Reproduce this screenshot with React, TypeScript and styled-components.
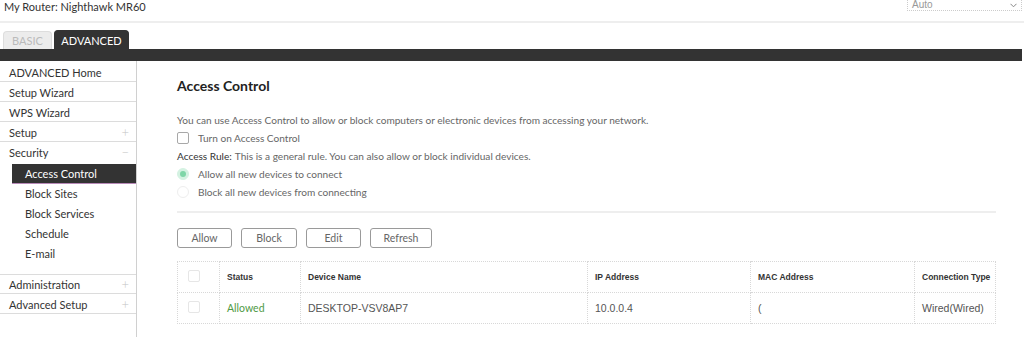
import styled, { createGlobalStyle } from 'styled-components';

const GlobalStyle = createGlobalStyle`
  html, body {
    margin: 0;
    padding: 0;
    background: #fff;
    font-family: Lato, "Open Sans", sans-serif;
    color: #333;
  }
  * {
    box-sizing: border-box;
  }
`;

const TopBar = styled.div`
  display: flex;
  justify-content: space-between;
  height: 23px;
  border-bottom: 2px solid #eeeeee;
`;

const RouterName = styled.div`
  font-size: 11px;
  line-height: 14px;
  padding-left: 4px;
  color: #333;
`;

const ModeSelect = styled.div`
  width: 115px;
  height: 11px;
  margin-right: 2px;
  border: 1px dotted #ccc;
  border-top: none;
  display: flex;
  justify-content: space-between;
  align-items: center;
  padding: 0 4px;
  font-family: "Liberation Sans", Arial, sans-serif;
  font-size: 10px;
  color: #999;
  line-height: 10px;
  overflow: hidden;
`;

const TabRow = styled.div`
  display: flex;
  align-items: flex-end;
  height: 26px;
  padding-left: 3px;
  gap: 2px;
`;

const Tab = styled.div<{ $active?: boolean; $w: number }>`
  width: ${(p) => p.$w}px;
  height: ${(p) => (p.$active ? '19px' : '18px')};
  border-radius: 4px 4px 0 0;
  font-size: 11px;
  display: flex;
  align-items: center;
  justify-content: center;
  background: ${(p) => (p.$active ? '#333' : '#ececec')};
  color: ${(p) => (p.$active ? '#fff' : '#bbb')};
  border: 1px solid ${(p) => (p.$active ? '#333' : '#ddd')};
  border-bottom: none;
`;

const DarkBar = styled.div`
  height: 12px;
  background: #333;
  margin-right: 2px;
`;

const Body = styled.div`
  display: flex;
`;

const Sidebar = styled.nav`
  width: 137px;
  flex-shrink: 0;
  border-right: 1px solid #d0d0d0;
  min-height: calc(100vh - 61px);
  padding-top: 1px;
`;

const NavItem = styled.div<{ $topBorder?: boolean; $last?: boolean }>`
  height: 20px;
  display: flex;
  align-items: center;
  justify-content: space-between;
  padding: 1px 7px 0 9px;
  font-size: 11px;
  color: #333;
  border-bottom: ${(p) => (p.$last ? 'none' : '1px solid #dcdcdc')};
  border-top: ${(p) => (p.$topBorder ? '1px solid #dcdcdc' : 'none')};
`;

const Sign = styled.span`
  color: #c4c4c4;
  font-size: 13px;
  font-weight: 300;
  line-height: 1;
`;

const SubList = styled.div`
  padding: 2px 0 10px 12px;
`;

const SubItem = styled.div<{ $active?: boolean }>`
  height: 20px;
  display: flex;
  align-items: center;
  padding-left: 13px;
  font-size: 11px;
  color: ${(p) => (p.$active ? '#fff' : '#333')};
  background: ${(p) => (p.$active ? '#333' : 'transparent')};
  border-bottom: 1px solid ${(p) => (p.$active ? '#b88ab8' : 'transparent')};
`;

const Main = styled.main`
  flex: 1;
  padding: 15px 29px 0 40px;
`;

const Title = styled.h1`
  margin: 0 0 15px;
  font-size: 14px;
  line-height: 20px;
  font-weight: 700;
  color: #222;
`;

const Line = styled.div`
  display: flex;
  align-items: center;
  height: 18px;
  font-size: 10.1px;
  color: #666;
  gap: 9px;

  b {
    color: #333;
    font-weight: 400;
    margin-right: 3px;
  }
`;

const CheckBox = styled.span<{ $faint?: boolean }>`
  width: 12px;
  height: 12px;
  border: 1px solid ${(p) => (p.$faint ? '#e6e6e6' : '#a8a8a8')};
  border-radius: 2px;
  display: inline-block;
  flex-shrink: 0;
`;

const Radio = styled.span<{ $checked?: boolean }>`
  width: 12px;
  height: 12px;
  border-radius: 50%;
  flex-shrink: 0;
  display: inline-flex;
  align-items: center;
  justify-content: center;
  background: ${(p) => (p.$checked ? '#d4f2e2' : '#fff')};
  border: 1px solid ${(p) => (p.$checked ? '#d4f2e2' : '#eeeeee')};

  &::after {
    content: '';
    width: 6px;
    height: 6px;
    border-radius: 50%;
    background: ${(p) => (p.$checked ? '#7fd6a8' : 'transparent')};
  }
`;

const Divider = styled.hr`
  border: none;
  height: 2px;
  background: #eeeeee;
  margin: 10px 0 15px;
`;

const ButtonRow = styled.div`
  display: flex;
  gap: 9px;
`;

const Button = styled.button<{ $w: number }>`
  width: ${(p) => p.$w}px;
  height: 20px;
  border: 1px solid #9a9a9a;
  border-radius: 3px;
  background: #fff;
  font-family: Lato, sans-serif;
  font-size: 10.5px;
  color: #666;
  padding: 0;
`;

const Table = styled.table`
  margin-top: 13px;
  width: 818px;
  border-collapse: collapse;
  table-layout: fixed;

  th,
  td {
    border: 1px dotted #d8d8d8;
    height: 31px;
    padding: 0 2px 0 7px;
    text-align: left;
    vertical-align: middle;
    white-space: nowrap;
    overflow: hidden;
  }
  th {
    font-family: "Liberation Sans", Arial, sans-serif;
    font-size: 8.5px;
    font-weight: 700;
    color: #333;
  }
  td {
    font-family: "Liberation Sans", Arial, sans-serif;
    font-size: 10.5px;
    color: #555;
  }
  th:first-child,
  td:first-child {
    padding-left: 10px;
  }
`;

const StatusCell = styled.td`
  && {
    font-family: Lato, sans-serif;
    font-size: 10.5px;
    color: #4f9a45;
  }
`;

const columns = [42, 81, 287, 163, 164, 81];

export default function App() {
  return (
    <>
      <GlobalStyle />
      <TopBar>
        <RouterName>My Router: Nighthawk MR60</RouterName>
        <ModeSelect>
          <span>Auto</span>
          <svg width="7" height="5" viewBox="0 0 7 5">
            <path d="M0.5 0.8 L3.5 3.8 L6.5 0.8" fill="none" stroke="#888" strokeWidth="1" />
          </svg>
        </ModeSelect>
      </TopBar>
      <TabRow>
        <Tab $w={49}>BASIC</Tab>
        <Tab $w={75} $active>
          ADVANCED
        </Tab>
      </TabRow>
      <DarkBar />
      <Body>
        <Sidebar>
          <NavItem>ADVANCED Home</NavItem>
          <NavItem>Setup Wizard</NavItem>
          <NavItem>WPS Wizard</NavItem>
          <NavItem>
            Setup<Sign>+</Sign>
          </NavItem>
          <NavItem $last>
            Security<Sign>&minus;</Sign>
          </NavItem>
          <SubList>
            <SubItem $active>Access Control</SubItem>
            <SubItem>Block Sites</SubItem>
            <SubItem>Block Services</SubItem>
            <SubItem>Schedule</SubItem>
            <SubItem>E-mail</SubItem>
          </SubList>
          <NavItem $topBorder>
            Administration<Sign>+</Sign>
          </NavItem>
          <NavItem>
            Advanced Setup<Sign>+</Sign>
          </NavItem>
        </Sidebar>
        <Main>
          <Title>Access Control</Title>
          <Line>
            You can use Access Control to allow or block computers or electronic devices from accessing your network.
          </Line>
          <Line>
            <CheckBox />
            Turn on Access Control
          </Line>
          <Line>
            <span>
              <b>Access Rule:</b>This is a general rule. You can also allow or block individual devices.
            </span>
          </Line>
          <Line>
            <Radio $checked />
            Allow all new devices to connect
          </Line>
          <Line>
            <Radio />
            Block all new devices from connecting
          </Line>
          <Divider />
          <ButtonRow>
            <Button $w={55}>Allow</Button>
            <Button $w={56}>Block</Button>
            <Button $w={55}>Edit</Button>
            <Button $w={62}>Refresh</Button>
          </ButtonRow>
          <Table>
            <colgroup>
              {columns.map((w, i) => (
                <col key={i} style={{ width: w }} />
              ))}
            </colgroup>
            <thead>
              <tr>
                <th>
                  <CheckBox $faint />
                </th>
                <th>Status</th>
                <th>Device Name</th>
                <th>IP Address</th>
                <th>MAC Address</th>
                <th>Connection Type</th>
              </tr>
            </thead>
            <tbody>
              <tr>
                <td>
                  <CheckBox $faint />
                </td>
                <StatusCell>Allowed</StatusCell>
                <td>DESKTOP-VSV8AP7</td>
                <td>10.0.0.4</td>
                <td>(</td>
                <td>Wired(Wired)</td>
              </tr>
            </tbody>
          </Table>
        </Main>
      </Body>
    </>
  );
}
